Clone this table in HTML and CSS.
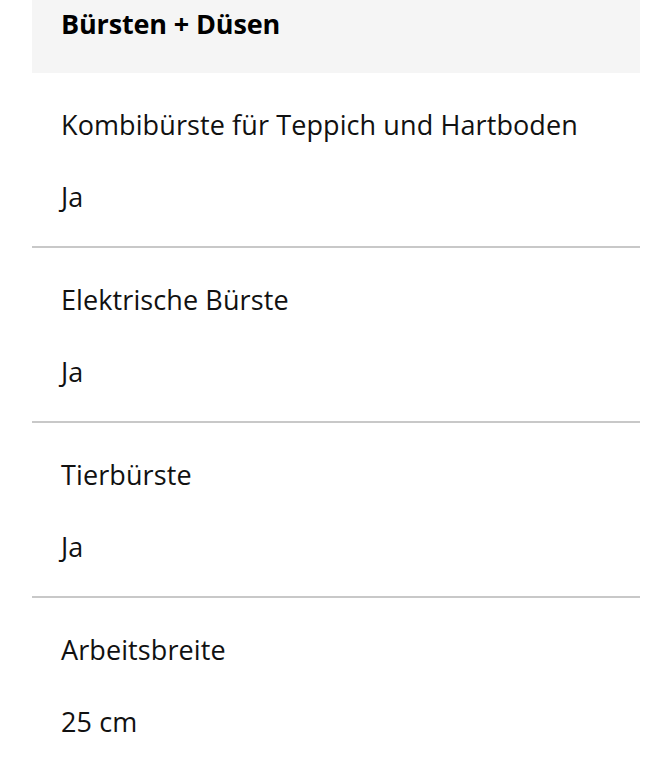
FILE: index.html
```html
<!DOCTYPE html>
<html lang="de">
<head>
    <meta charset="UTF-8">
    <meta name="viewport" content="width=device-width, initial-scale=1.0">
    <title>Bürsten + Düsen</title>
    <link rel="stylesheet" href="styles.css">
</head>
<body>
    <div class="specs">
        <h3 class="specs-title">Bürsten + Düsen</h3>
        <div class="spec-row">
            <div class="spec-label">Kombibürste für Teppich und Hartboden</div>
            <div class="spec-value">Ja</div>
        </div>
        <div class="spec-row">
            <div class="spec-label">Elektrische Bürste</div>
            <div class="spec-value">Ja</div>
        </div>
        <div class="spec-row">
            <div class="spec-label">Tierbürste</div>
            <div class="spec-value">Ja</div>
        </div>
        <div class="spec-row">
            <div class="spec-label">Arbeitsbreite</div>
            <div class="spec-value">25 cm</div>
        </div>
    </div>
</body>
</html>
```

FILE: styles.css
```css
body {
    margin: 0;
    font-family: "Open Sans", Arial, sans-serif;
    background: white;
    color: #111;
}
.specs {
    margin: 0 31px 0 32px;
}
.specs-title {
    margin: 0;
    background: #f5f5f5;
    height: 73px;
    box-sizing: border-box;
    padding: 6px 29px 0;
    font-size: 27px;
    font-weight: 700;
    line-height: 36px;
    letter-spacing: -0.15px;
    color: #000;
}
.spec-row {
    padding: 34px 29px 31px;
    border-bottom: 2px solid #c8c8c8;
}
.spec-label, .spec-value {
    font-size: 27px;
    line-height: 36px;
    letter-spacing: 0.1px;
}
.spec-value {
    margin-top: 36px;
}
```
